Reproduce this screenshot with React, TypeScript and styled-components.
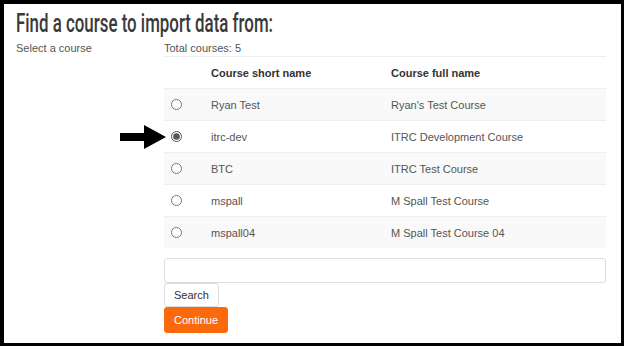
import React, { useState } from "react";
import styled, { createGlobalStyle } from "styled-components";

const GlobalStyle = createGlobalStyle`
  html, body {
    margin: 0;
    padding: 0;
    background: #fff;
  }
  body {
    font-family: "Liberation Sans", Arial, sans-serif;
    font-size: 11px;
    color: #555;
  }
`;

const Frame = styled.div`
  box-sizing: border-box;
  width: 624px;
  height: 346px;
  border-style: solid;
  border-color: #000;
  border-width: 4px 3px 3px 4px;
  padding: 6px 0 0 12px;
  background: #fff;
`;

const Title = styled.h2`
  margin: 0;
  font-family: Roboto, "DejaVu Sans", sans-serif;
  font-weight: 500;
  font-size: 25px;
  line-height: 28px;
  color: #3a3a3a;
  white-space: nowrap;
  transform: scaleX(0.675);
  transform-origin: left center;
`;

const Body = styled.div`
  display: grid;
  grid-template-columns: 148px 442px;
`;

const Label = styled.div`
  padding-top: 3px;
  line-height: 14px;
`;

const Content = styled.div`
  display: flex;
  flex-direction: column;
`;

const Total = styled.div`
  padding-top: 3px;
  line-height: 14px;
  height: 15px;
`;

const Table = styled.table`
  width: 100%;
  border-collapse: collapse;
  margin-bottom: 10px;
`;

const HeadCell = styled.th<{ $w?: number }>`
  text-align: left;
  font-weight: bold;
  color: #333;
  height: 31px;
  padding: 0;
  border-top: 1px solid #eee;
  width: ${(p) => (p.$w ? `${p.$w}px` : "auto")};
`;

const Row = styled.tr<{ $striped: boolean }>`
  background: ${(p) => (p.$striped ? "#f9f9f9" : "#fff")};
`;

const Cell = styled.td`
  height: 31px;
  padding: 0;
  border-top: 1px solid #eee;
  vertical-align: middle;
`;

const RadioCell = styled(Cell)`
  position: relative;
  padding-left: 7px;
`;

const Radio = styled.input`
  margin: 0;
  width: 11px;
  height: 11px;
  display: block;
  accent-color: #555;
`;

const Arrow = styled.svg`
  position: absolute;
  left: -44px;
  top: 4px;
`;

const SearchInput = styled.input`
  box-sizing: border-box;
  width: 100%;
  height: 25px;
  border: 1px solid #ddd;
  border-radius: 3px;
  padding: 0 6px;
  font: inherit;
`;

const Button = styled.button<{ $primary?: boolean }>`
  align-self: flex-start;
  box-sizing: border-box;
  height: ${(p) => (p.$primary ? "26px" : "24px")};
  padding: 0 9px;
  font-family: "Liberation Sans", Arial, sans-serif;
  font-size: 11px;
  border-radius: 3px;
  cursor: pointer;
  border: 1px solid ${(p) => (p.$primary ? "#f96a0b" : "#ddd")};
  background: ${(p) => (p.$primary ? "#fa6a0c" : "#fff")};
  color: ${(p) => (p.$primary ? "#fff" : "#333")};
`;

const courses = [
  { short: "Ryan Test", full: "Ryan's Test Course" },
  { short: "itrc-dev", full: "ITRC Development Course" },
  { short: "BTC", full: "ITRC Test Course" },
  { short: "mspall", full: "M Spall Test Course" },
  { short: "mspall04", full: "M Spall Test Course 04" },
];

export default function App() {
  const [selected, setSelected] = useState(1);

  return (
    <>
      <GlobalStyle />
      <Frame>
        <Title>Find a course to import data from:</Title>
        <Body>
          <Label>Select a course</Label>
          <Content>
            <Total>Total courses: 5</Total>
            <Table>
              <thead>
                <tr>
                  <HeadCell $w={47} />
                  <HeadCell $w={180}>Course short name</HeadCell>
                  <HeadCell>Course full name</HeadCell>
                </tr>
              </thead>
              <tbody>
                {courses.map((c, i) => (
                  <Row key={c.short} $striped={i % 2 === 0}>
                    <RadioCell>
                      {i === selected && (
                        <Arrow width="46" height="24" viewBox="0 0 46 24">
                          <path d="M0 8 H24 V0 L46 12 L24 24 V16 H0 Z" fill="#000" />
                        </Arrow>
                      )}
                      <Radio
                        type="radio"
                        name="course"
                        checked={i === selected}
                        onChange={() => setSelected(i)}
                      />
                    </RadioCell>
                    <Cell>{c.short}</Cell>
                    <Cell>{c.full}</Cell>
                  </Row>
                ))}
              </tbody>
            </Table>
            <SearchInput type="text" />
            <Button>Search</Button>
            <Button $primary>Continue</Button>
          </Content>
        </Body>
      </Frame>
    </>
  );
}
